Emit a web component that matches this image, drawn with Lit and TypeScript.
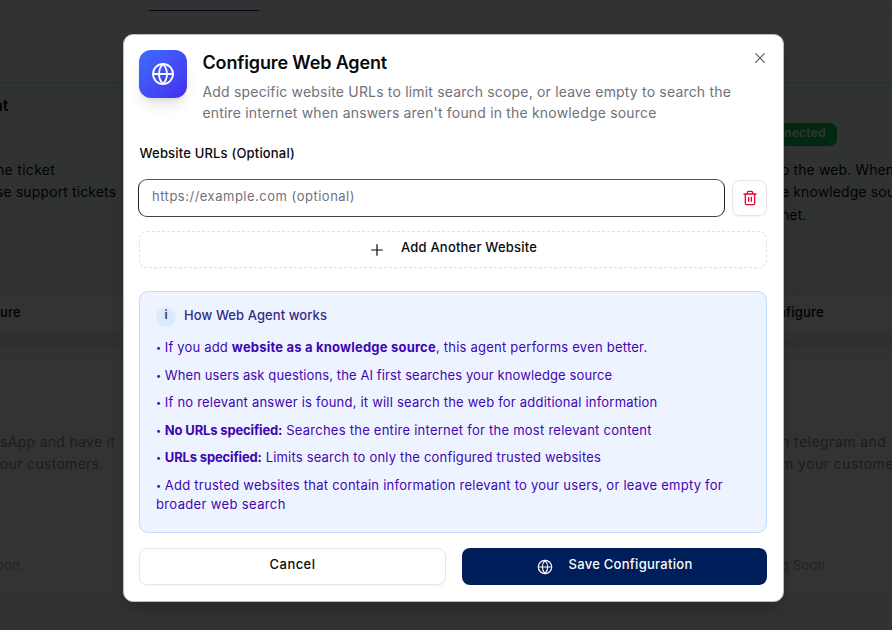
import { LitElement, html, css, svg } from "lit";
import { customElement, property } from "lit/decorators.js";

interface Run {
  text: string;
  track?: number;
  strong?: boolean;
}

const ICONS = {
  globe: svg`<circle cx="12" cy="12" r="10"/><path d="M12 2a14.5 14.5 0 0 0 0 20 14.5 14.5 0 0 0 0-20M2 12h20"/>`,
  plus: svg`<path d="M4 12h16M12 4v16"/>`,
  close: svg`<path d="M18.5 5.5l-13 13M5.5 5.5l13 13"/>`,
  trash: svg`<path d="M3 6h18M19 6v14c0 1-1 2-2 2H7c-1 0-2-1-2-2V6M8 6V4c0-1 1-2 2-2h4c1 0 2 1 2 2v2M10 11v6M14 11v6"/>`,
};

@customElement("line-icon")
export class LineIcon extends LitElement {
  @property() name: keyof typeof ICONS = "globe";

  static styles = css`
    :host { display: block; flex: none; }
    svg {
      display: block;
      width: 100%;
      height: 100%;
      fill: none;
      stroke: currentColor;
      stroke-width: var(--stroke, 2);
      stroke-linecap: round;
      stroke-linejoin: round;
    }
  `;

  render() {
    return html`<svg viewBox="0 0 24 24">${ICONS[this.name]}</svg>`;
  }
}

const run = (r: Run) =>
  html`<span class=${r.strong ? "run strong" : "run"} style="letter-spacing:${r.track ?? 0}px">${r.text}</span>`;

const NOTES: Run[][] = [
  [
    { text: "If you add ", track: 0.18 },
    { text: "website as a knowledge source", track: 0.2, strong: true },
    { text: ", this agent performs even better.", track: 0.23 },
  ],
  [{ text: "When users ask questions, the AI first searches your knowledge source", track: 0.11 }],
  [{ text: "If no relevant answer is found, it will search the web for additional information", track: 0.21 }],
  [
    { text: "No URLs specified:", track: -0.15, strong: true },
    { text: " Searches the entire internet for the most relevant content", track: 0.25 },
  ],
  [
    { text: "URLs specified:", track: -0.15, strong: true },
    { text: " Limits search to only the configured trusted websites", track: 0.19 },
  ],
  [
    { text: "Add trusted websites that contain information relevant to your users, or leave empty for\n", track: 0.25 },
    { text: "broader web search", track: 0.36 },
  ],
];

@customElement("agents-page")
export class AgentsPage extends LitElement {
  static styles = css`
    :host {
      display: block;
      height: 630px;
      overflow: hidden;
      background: #fbfbfb;
      color: #09090b;
    }
    .tabs { height: 10px; border-bottom: 1px solid #ececec; display: flex; }
    .tab { width: 110px; height: 11px; margin-left: 149px; border-bottom: 1px solid #1c1a80; box-sizing: border-box; }
    .cards { display: grid; grid-template-columns: 450px 442px; row-gap: 16px; padding-top: 71px; }
    .card {
      box-sizing: border-box;
      height: 262px;
      display: flex;
      flex-direction: column;
      border: 1px solid #a4f4df;
      border-width: 1px 0;
      background: linear-gradient(#f6fefb, #ebf6f1);
      box-shadow: 0 2px 4px rgba(0, 0, 0, 0.12);
    }
    .body { flex: 1; box-sizing: border-box; }
    .left .body { padding: 10px 0 0 0; }
    .right .body { padding: 40px 0 0 0; }
    .right { padding-left: 332px; }
    h3 { margin: 0; font: 600 16px/24px Inter, sans-serif; letter-spacing: -0.1px; }
    .left h3 { margin-bottom: 42px; margin-left: -7px; }
    p { margin: 0; font-size: 14px; line-height: 22.4px; letter-spacing: 0.12px; white-space: pre; }
    .left p { margin-left: -4px; }
    .left p:nth-child(2) { letter-spacing: 0.3px; }
    .right p { letter-spacing: 0.1px; margin-left: -1px; }
    .badge {
      box-sizing: border-box;
      width: 55px;
      height: 23px;
      border-radius: 0 7px 7px 0;
      background: #00d053;
      color: #fff;
      font: 600 12px/20px Inter, sans-serif;
      letter-spacing: 0.3px;
      padding-left: 2px;
      margin-bottom: 13px;
    }
    .action {
      height: 38px;
      margin-bottom: 9px;
      background: #fbfdfc;
      border: 1px solid #d8e6e1;
      border-width: 1px 0;
      font: 500 13px/35px Inter, sans-serif;
      letter-spacing: 0.2px;
    }
    .right .action { margin-left: -332px; padding-left: 328px; }
    .muted { height: 235px; background: #fdfdfd; border: 0; box-shadow: 0 1px 2px rgba(0, 0, 0, 0.05); color: #909090; }
    .muted .body, .right.muted .body { padding-top: 71px; }
    .left.muted p:first-child { letter-spacing: 0.3px; margin-left: 0; }
    .left.muted p { margin-left: 0; }
    .right.muted p { letter-spacing: 0.45px; }
    .muted .action { height: 36px; margin-bottom: 12px; background: none; border: 0; color: #b8b8b8; line-height: 36px; }
    .left.muted .action { margin-left: -4px; }
    .right.muted .action { padding-left: 331px; }
  `;

  render() {
    return html`
      <div class="tabs"><div class="tab"></div></div>
      <div class="cards">
        <section class="card left">
          <div class="body"><h3>nt</h3><p>ne ticket</p><p>se support tickets</p></div>
          <div class="action">ure</div>
        </section>
        <section class="card right">
          <div class="body">
            <div class="badge">nected</div>
            <p>o the web. When</p><p>e knowledge sou</p><p>net.</p>
          </div>
          <div class="action">nfigure</div>
        </section>
        <section class="card left muted">
          <div class="body"><p>sApp and have it</p><p>our customers.</p></div>
          <div class="action">oon</div>
        </section>
        <section class="card right muted">
          <div class="body"><p>n telegram and</p><p>m your customers</p></div>
          <div class="action">g Soon</div>
        </section>
      </div>
    `;
  }
}

@customElement("app-root")
export class AppRoot extends LitElement {
  static styles = css`
    :host {
      display: block;
      position: relative;
      width: 892px;
      height: 630px;
      overflow: hidden;
      font-family: Inter, sans-serif;
      color: #09090b;
    }
    * { box-sizing: border-box; }
    .overlay {
      position: absolute;
      inset: 0;
      background: rgba(0, 0, 0, 0.8);
      padding: 34px 0 0 123px;
    }
    .dialog {
      position: relative;
      width: 661px;
      height: 568px;
      padding: 15px 16px;
      display: flex;
      flex-direction: column;
      background: #fff;
      border: 1px solid #bdbdbd;
      border-radius: 10px;
      box-shadow: 0 10px 15px -3px rgba(0, 0, 0, 0.2);
    }
    .close {
      position: absolute;
      top: 15px;
      right: 15px;
      width: 16px;
      height: 16px;
      color: #5c5c5e;
      --stroke: 1.7;
    }
    .header { display: flex; gap: 15.5px; height: 94px; }
    .tile {
      width: 48px;
      height: 48px;
      margin-left: -1px;
      display: grid;
      place-items: center;
      border-radius: 12px;
      color: #fff;
      background: linear-gradient(135deg, #3f6dfd, #4530ee);
      box-shadow: 0 9px 14px -3px rgba(0, 0, 0, 0.12), 0 4px 6px -4px rgba(0, 0, 0, 0.1);
    }
    .tile line-icon { width: 24px; height: 24px; --stroke: 1.8; }
    h2 { margin: 1px 0 0; font-size: 18px; font-weight: 600; line-height: 24px; letter-spacing: -0.14px; }
    .lead { margin: 6px 0 0; color: #71717a; font-size: 14px; line-height: 21px; letter-spacing: 0.18px; white-space: pre; }
    .label { font-size: 13px; font-weight: 500; line-height: 18px; letter-spacing: 0.18px; margin-left: -0.5px; }
    .urls { display: flex; align-items: center; gap: 7px; margin: 17px 0 14px -2px; height: 38px; }
    .field {
      width: 588px;
      height: 38px;
      padding: 0 13px;
      border: 1px solid;
      border-color: #555 #222 #444 #222;
      border-radius: 9px;
      font-size: 13px;
      line-height: 33px;
      letter-spacing: 0.5px;
      color: #71717a;
    }
    .remove {
      width: 35px;
      height: 36px;
      display: grid;
      place-items: center;
      border: 1px solid #e6e6e8;
      border-radius: 8px;
      box-shadow: 0 1px 2px rgba(0, 0, 0, 0.05);
      color: #ee0038;
    }
    .remove line-icon { width: 16px; height: 16px; }
    .button {
      height: 37px;
      display: flex;
      align-items: center;
      justify-content: center;
      gap: 16px;
      border-radius: 8px;
      font-size: 13px;
      font-weight: 500;
      line-height: 18px;
    }
    .button .text { padding-bottom: 5px; }
    .button line-icon { width: 16px; height: 16px; --stroke: 1.8; }
    .add {
      border: 1px dashed #e2e2e5;
      box-shadow: 0 1px 2px rgba(0, 0, 0, 0.03);
      letter-spacing: 0.2px;
      flex: none;
      margin-left: -1px;
      width: 628px;
    }
    .info {
      flex: none;
      width: 628px;
      height: 242px;
      margin: 23px 0 0 -1px;
      padding: 15px 16px;
      border: 1px solid #bedbff;
      border-radius: 9px;
      background: #eef4ff;
    }
    .info-head { display: flex; gap: 8px; height: 31px; }
    .dot {
      width: 20px;
      height: 20px;
      border-radius: 50%;
      background: #dbeafe;
      text-align: center;
      font-size: 12px;
      font-weight: 600;
      line-height: 16px;
      color: #3f3f46;
    }
    .info-title { color: #312c85; font-size: 13px; font-weight: 500; line-height: 17px; letter-spacing: 0.08px; }
    .notes { display: grid; gap: 8px; color: #3f06b2; font-size: 13px; line-height: 19.5px; }
    .note { white-space: pre; }
    .note::before {
      content: "•";
      display: inline-block;
      width: 8.8px;
      font-size: 9px;
      line-height: 1;
      vertical-align: 1px;
    }
    .strong { font-weight: 700; }
    .footer { display: grid; grid-template-columns: 307px 305px; gap: 16px; margin: 15px 0 0 -1px; }
    .cancel { border: 1px solid #e6e6e8; box-shadow: 0 1px 2px rgba(0, 0, 0, 0.05); letter-spacing: 0.45px; }
    .save { background: #001e5a; color: #fafafa; letter-spacing: 0.28px; }
  `;

  render() {
    return html`
      <agents-page></agents-page>
      <div class="overlay">
        <div class="dialog" role="dialog">
          <line-icon class="close" name="close"></line-icon>
          <div class="header">
            <div class="tile"><line-icon name="globe"></line-icon></div>
            <div>
              <h2>Configure Web Agent</h2>
              <p class="lead">${"Add specific website URLs to limit search scope, or leave empty to search the\nentire internet when answers aren't found in the knowledge source"}</p>
            </div>
          </div>
          <div class="label">Website URLs (Optional)</div>
          <div class="urls">
            <div class="field">https://example.com (optional)</div>
            <div class="remove"><line-icon name="trash"></line-icon></div>
          </div>
          <div class="button add"><line-icon name="plus"></line-icon><span class="text">Add Another Website</span></div>
          <div class="info">
            <div class="info-head"><div class="dot">i</div><div class="info-title">How Web Agent works</div></div>
            <div class="notes">${NOTES.map((n) => html`<div class="note">${n.map(run)}</div>`)}</div>
          </div>
          <div class="footer">
            <div class="button cancel"><span class="text">Cancel</span></div>
            <div class="button save"><line-icon name="globe"></line-icon><span class="text">Save Configuration</span></div>
          </div>
        </div>
      </div>
    `;
  }
}
